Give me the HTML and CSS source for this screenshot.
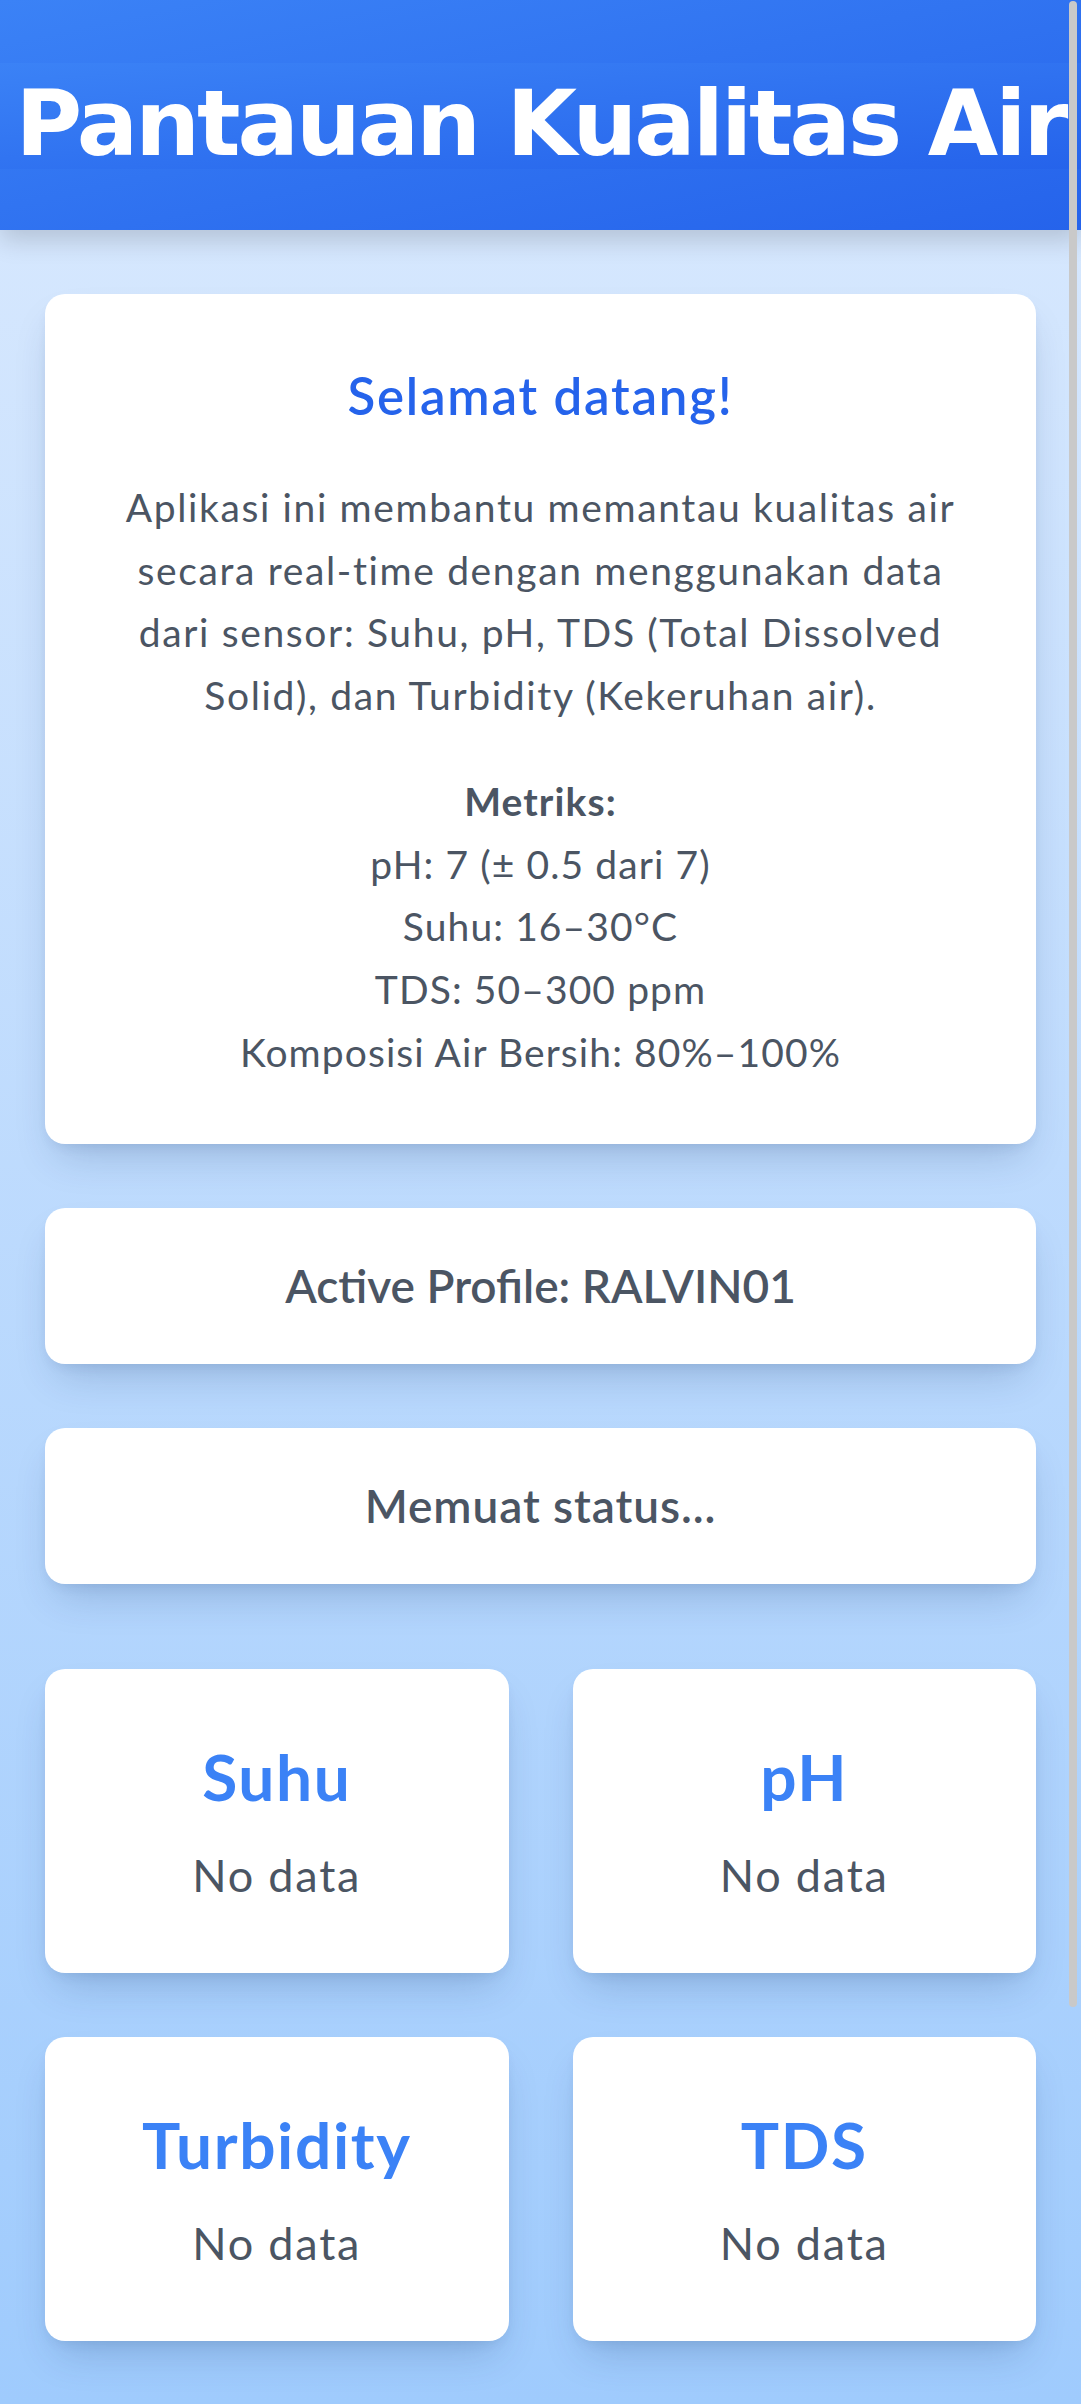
FILE: index.html
```html
<!DOCTYPE html>
<html lang="id">
<head>
<meta charset="utf-8">
<meta name="viewport" content="width=device-width, initial-scale=1">
<title>Pantauan Kualitas Air</title>
<link rel="stylesheet" href="styles.css">
</head>
<body>
  <header class="app-header">
    <h1 class="app-title">Pantauan Kualitas Air</h1>
  </header>

  <main class="content">
    <section class="card intro">
      <h2 class="intro-title">Selamat datang!</h2>
      <p class="intro-text">Aplikasi ini membantu memantau kualitas air secara real-time dengan menggunakan data dari sensor: Suhu, pH, TDS (Total Dissolved Solid), dan Turbidity (Kekeruhan air).</p>
      <p class="metrics"><strong>Metriks:</strong><br>pH: 7 (± 0.5 dari 7)<br>Suhu: 16–30°C<br>TDS: 50–300 ppm<br>Komposisi Air Bersih: 80%–100%</p>
    </section>

    <section class="card status-card">Active Profile: RALVIN01</section>

    <section class="card status-card status-loading">Memuat status...</section>

    <section class="sensor-grid">
      <div class="card sensor-card">
        <h3 class="sensor-name">Suhu</h3>
        <p class="sensor-value">No data</p>
      </div>
      <div class="card sensor-card">
        <h3 class="sensor-name">pH</h3>
        <p class="sensor-value">No data</p>
      </div>
      <div class="card sensor-card">
        <h3 class="sensor-name">Turbidity</h3>
        <p class="sensor-value">No data</p>
      </div>
      <div class="card sensor-card">
        <h3 class="sensor-name">TDS</h3>
        <p class="sensor-value">No data</p>
      </div>
    </section>
  </main>

  <div class="scroll-thumb" aria-hidden="true"></div>
</body>
</html>
```

FILE: styles.css
```css
* {
  box-sizing: border-box;
}

html {
  overflow: hidden;
}

html,
body {
  margin: 0;
  padding: 0;
}

body {
  min-height: 2404px;
  font-family: Lato, "Noto Sans", sans-serif;
  color: #4b5563;
  background: linear-gradient(to bottom, #dbeafe 0%, #9fcbfd 100%);
}

.app-header {
  position: relative;
  z-index: 1;
  padding: 63px 0 61px;
  background: linear-gradient(to bottom right, #3b82f6, #2563eb);
  box-shadow: 0 10px 24px rgba(0, 0, 0, 0.16);
}

.app-title {
  margin: 0;
  height: 106px;
  padding-top: 16px;
  background: linear-gradient(to bottom right, #3b82f6, #2563eb);
  color: #ffffff;
  font-family: "DejaVu Sans", sans-serif;
  font-weight: 700;
  font-size: 91px;
  line-height: 90px;
  letter-spacing: -3px;
  text-align: center;
  white-space: nowrap;
}

.content {
  display: flex;
  flex-direction: column;
  gap: 64px;
  padding: 64px 45px 62px;
}

.card {
  background: #ffffff;
  border-radius: 20px;
  box-shadow: 0 22px 40px -12px rgba(20, 50, 100, 0.22), 0 6px 14px -6px rgba(20, 50, 100, 0.12);
  text-align: center;
}

.intro {
  padding: 40px 60px 61px;
}

.intro-title {
  margin: 31px 0 0;
  color: #2563eb;
  font-size: 51px;
  line-height: 61px;
  font-weight: 600;
  letter-spacing: 0.035em;
}

.intro-text {
  margin: 50px 0 43px;
  font-size: 39px;
  line-height: 62.7px;
  letter-spacing: 0.042em;
}

.metrics {
  margin: 0;
  font-size: 39px;
  line-height: 62.7px;
  letter-spacing: 0.028em;
}

.metrics strong {
  font-weight: 700;
}

.status-card {
  padding: 50px 40px;
  font-size: 46px;
  line-height: 56px;
  font-weight: 600;
}

.status-loading {
  letter-spacing: 0.02em;
}

.sensor-grid {
  display: grid;
  grid-template-columns: 1fr 1fr;
  gap: 64px;
  margin-top: 21px;
}

.sensor-card {
  padding: 69px 20px 71px;
}

.sensor-name {
  margin: 0;
  color: #3b82f6;
  font-size: 64px;
  line-height: 77px;
  font-weight: 700;
  letter-spacing: 0.025em;
}

.sensor-value {
  margin: 33px 0 0;
  font-size: 45px;
  line-height: 54px;
  letter-spacing: 0.04em;
}

.scroll-thumb {
  position: fixed;
  top: 1px;
  right: 4px;
  width: 8px;
  height: 2006px;
  border-radius: 4px;
  background: #c9c9c9;
  z-index: 5;
}
```
